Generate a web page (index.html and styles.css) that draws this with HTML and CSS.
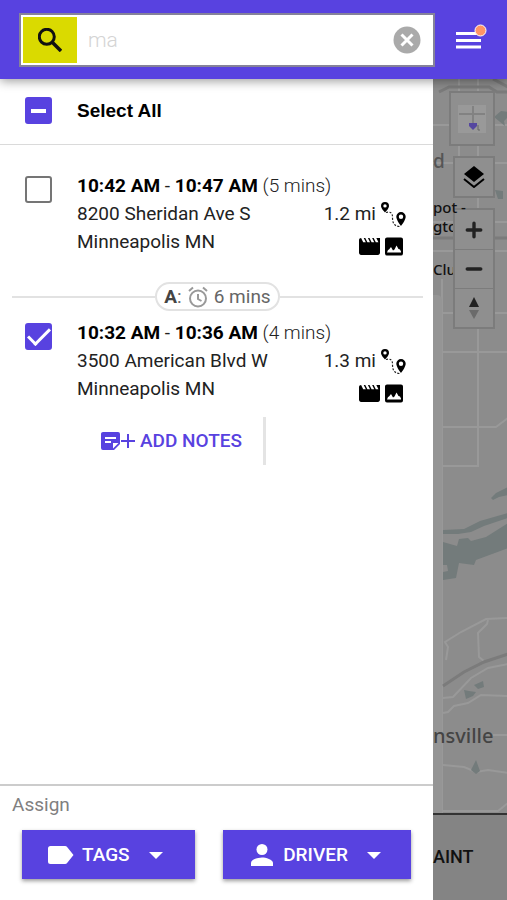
FILE: index.html
```html
<!DOCTYPE html>
<html lang="en">
<head>
<meta charset="utf-8">
<meta name="viewport" content="width=device-width, initial-scale=1">
<title>Trips</title>
<link rel="stylesheet" href="styles.css">
</head>
<body>
<svg class="defs" aria-hidden="true">
  <symbol id="route" viewBox="0 0 26 26">
    <path fill-rule="evenodd" d="M5 0a4 4 0 0 0-4 4c0 2.500 4 6.500 4 6.500S9 6.500 9 4a4 4 0 0 0-4-4zm0 2.200a1.700 1.700 0 1 1 0 3.400 1.700 1.700 0 0 1 0-3.400z"/>
    <path fill-rule="evenodd" d="M21 10a4.700 4.700 0 0 0-4.700 4.700C16.300 18 21 24 21 24s4.700-6 4.700-9.300A4.700 4.700 0 0 0 21 10zm0 2.600a2.200 2.200 0 1 1 0 4.400 2.200 2.200 0 0 1 0-4.400z"/>
    <path d="M6 10.500c4-1 6.500 0 6.500 4.500s.5 9 7 9.500" fill="none" stroke="currentColor" stroke-width="1.200" stroke-dasharray="2 1.500"/>
  </symbol>
  <symbol id="movie" viewBox="2 4 20 16">
    <path d="M18.500 4l2 4h-2.500l-2-4h-1.500l2 4H14l-2-4h-1.500l2 4H10L8 4H6.500l2 4H6L4 4c-1.100 0-2 .9-2 2v12c0 1.100.9 2 2 2h16c1.100 0 2-.9 2-2V4z"/>
  </symbol>
  <symbol id="photo" viewBox="3 3 18 18">
    <path fill-rule="evenodd" d="M5 3h14a2 2 0 0 1 2 2v14a2 2 0 0 1-2 2H5a2 2 0 0 1-2-2V5c0-1.100.9-2 2-2zm0 15h14v-1l-1-2-1.500-.5L14.500 11l-2 4-1.500 1-2-3.500L7 15l-1 .5z"/>
  </symbol>
</svg>

<header class="topbar">
  <form class="search" role="search">
    <button class="search-go" type="button" aria-label="Search">
      <svg viewBox="0 0 24 24"><circle cx="8.800" cy="8.800" r="7.500"/><path d="M14 14l9 9" stroke-width="3.500"/></svg>
    </button>
    <input class="search-text" type="text" value="ma" aria-label="Search trips">
    <button class="search-clear" type="button" aria-label="Clear search">
      <svg viewBox="0 0 28 28"><circle cx="14" cy="14" r="13.500"/><path d="M8.500 8.500l11 11M19.500 8.500l-11 11"/></svg>
    </button>
  </form>
  <button class="menu" type="button" aria-label="Menu">
    <svg viewBox="0 0 32 28"><path d="M1 10.500h25M1 17.500h25M1 24h25"/><circle cx="25.500" cy="7.500" r="5.500"/></svg>
  </button>
</header>

<div class="content">
  <main class="drawer">
    <div class="select-all">
      <input class="check mixed" type="checkbox" id="all">
      <label for="all">Select All</label>
    </div>

    <div class="trips">
      <article class="trip">
        <input class="check" type="checkbox" id="trip1">
        <div class="trip-body">
          <label class="times" for="trip1"><b>10:42 AM</b> - <b>10:47 AM</b> <span class="length">(5 mins)</span></label>
          <div class="line"><span>8200 Sheridan Ave S</span><span class="miles">1.2 mi <svg class="route"><use href="#route"/></svg></span></div>
          <div class="line"><span>Minneapolis MN</span><span class="media"><svg class="movie"><use href="#movie"/></svg><svg class="photo"><use href="#photo"/></svg></span></div>
        </div>
      </article>

      <div class="stop">
        <span class="pill"><span><b>A</b>:</span>
          <svg class="alarm" viewBox="0 0 20 22"><circle cx="10" cy="12.500" r="8"/><path d="M10 8v5l3.500 2M1 5l4-3.500M19 5l-4-3.500"/></svg>
          <span>6 mins</span></span>
      </div>

      <article class="trip">
        <input class="check" type="checkbox" id="trip2" checked>
        <div class="trip-body">
          <label class="times" for="trip2"><b>10:32 AM</b> - <b>10:36 AM</b> <span class="length">(4 mins)</span></label>
          <div class="line"><span>3500 American Blvd W</span><span class="miles">1.3 mi <svg class="route"><use href="#route"/></svg></span></div>
          <div class="line"><span>Minneapolis MN</span><span class="media"><svg class="movie"><use href="#movie"/></svg><svg class="photo"><use href="#photo"/></svg></span></div>
        </div>
      </article>

      <div class="notes">
        <button class="add-notes" type="button">
          <svg viewBox="0 0 35 20"><path fill-rule="evenodd" d="M2 1h15a2 2 0 0 1 2 2v10l-6 6H2a2 2 0 0 1-2-2V3c0-1.100.9-2 2-2zm2 5v2h11V6zm0 4v2h6v-2zm8 7.500l5.500-5.500H12z"/><path d="M20 9h6V3h2v6h6v2h-6v6h-2v-6h-6z"/></svg>
          ADD NOTES
        </button>
      </div>
    </div>

    <footer class="assign">
      <div class="assign-title">Assign</div>
      <div class="actions">
        <button class="action tags" type="button">
          <svg class="icon" viewBox="0 0 26 24"><path d="M2.500 3H17a3 3 0 0 1 2.300 1.200L25.500 12l-6.200 7.800A3 3 0 0 1 17 21H2.500A2.500 2.500 0 0 1 0 18.500v-13A2.500 2.500 0 0 1 2.500 3z"/></svg>
          TAGS
          <svg class="caret" viewBox="0 0 14 8"><path d="M0 0h14L7 7z"/></svg>
        </button>
        <button class="action driver" type="button">
          <svg class="icon" viewBox="0 0 26 24"><circle cx="13" cy="6.500" r="5.500"/><path d="M2 23v-3c0-3.600 7.300-5.600 11-5.600s11 2 11 5.600v3z"/></svg>
          DRIVER
          <svg class="caret" viewBox="0 0 14 8"><path d="M0 0h14L7 7z"/></svg>
        </button>
      </div>
    </footer>
  </main>

  <aside class="side">
    <div class="map">
      <svg class="terrain" viewBox="0 0 74 734" preserveAspectRatio="xMinYMin slice" aria-hidden="true">
        <path class="road" d="M9 200v534M45 0v387H9M26 0v80M0 46h75M0 84h75M0 143h75M0 172h75M9 234h66M9 273h66M9 348h54l12-9M60 656h15"/>
        <path class="road" d="M13 581l2-13-3-5 16-10 25-13 22-1M55 541l-1 4-9 9 1 24 5 4M10 619l10-1 18-19 17-10 20-4M10 634l5-1 6-6 14-3 13-8 27 1M10 686l21 2 12 5 12-2 20 3M10 732h55l10-8"/>
        <path class="highway" d="M10 607l21-14 20-10 24-8M0 159h75M6 13l10-5h40l8 5h11M60 0l15 8"/>
        <path class="water" d="M10 451l21-1 16-8 28-8v5l-24 8-13 6-13 2H10zM10 463l7 2 7 2 2-7 9-1 3 3 15-4 22-14v25l-32 12-2 5-15-2-3 15-13 2v-8l5-1-1-6h-4zM58 419l5-5 12-6v8l-9 2-6 3zM31 611l5 1 7 1-3 4-7 3zM41 606l9-4 1 6-6 2zM38 691l5-10 4 11-4 3zM61 38l7-6 7 1v5l-4 4 1 5zM62 111l8 1v8h-5z"/>
        <path class="strip" d="M0 216h4a5 5 0 0 1 5 5v513H0z"/>
      </svg>
      <span class="place place-d">d</span>
      <span class="place place-depot">pot -</span>
      <span class="place place-gton">gton</span>
      <span class="place place-club">Club</span>
      <span class="place place-town">nsville</span>
      <div class="controls">
        <button class="tool preview" type="button" aria-label="Map style">
          <svg viewBox="0 0 28 28"><path fill="#999" d="M0 0h28v28H0z"/><path d="M1 9h26M15 1v20" stroke="#828282" stroke-width="2"/><path fill="#5547a0" d="M11 18h8v3l-4 4-4-4z"/><path d="M20 20v5h2" fill="none" stroke="#666"/></svg>
        </button>
        <button class="tool layers" type="button" aria-label="Layers">
          <svg viewBox="0 0 22 22"><path d="M11 0l10 8-10 8L1 8z"/><path d="M1 13l10 8 10-8" fill="none" stroke="#000" stroke-width="2"/></svg>
        </button>
        <div class="zoom">
          <button class="tool" type="button" aria-label="Zoom in"><svg viewBox="0 0 16 16"><path d="M8 2v12M2 8h12"/></svg></button>
          <button class="tool" type="button" aria-label="Zoom out"><svg viewBox="0 0 16 16"><path d="M2 8h12"/></svg></button>
          <button class="tool compass" type="button" aria-label="Reset north"><svg viewBox="0 0 12 24"><path d="M6 1l5 10H1z"/><path class="south" d="M6 23l5-9H1z"/></svg></button>
        </div>
      </div>
    </div>
    <div class="tab">AINT</div>
  </aside>
</div>
</body>
</html>
```
FILE: styles.css
```css
:root {
  --brand: #5842e0;
}

* {
  box-sizing: border-box;
}

body {
  margin: 0;
  min-height: 100vh;
  display: flex;
  flex-direction: column;
  font: 19px/28px Roboto, "Liberation Sans", sans-serif;
  color: #222;
}

button {
  margin: 0;
  padding: 0;
  border: 0;
  background: none;
  font: inherit;
  color: inherit;
  display: flex;
  align-items: center;
  justify-content: center;
}

svg {
  display: block;
  flex: none;
}

b {
  font-weight: 700;
  color: #000;
}

.defs {
  position: absolute;
  width: 0;
  height: 0;
}

/* Top bar */
.topbar {
  position: relative;
  z-index: 1;
  display: flex;
  gap: 19px;
  padding: 13px 19px 12px 19px;
  background: var(--brand);
  box-shadow: 0 2px 10px rgba(0, 0, 0, .4);
}

.search {
  flex: 1;
  min-width: 0;
  display: flex;
  height: 54px;
  padding: 2px;
  border: 2px solid #85829a;
  background: #fff;
}

.search-go {
  width: 54px;
  background: #dada00;
}

.search-go svg {
  width: 24px;
  height: 24px;
  fill: none;
  stroke: #111;
  stroke-width: 3;
}

.search-text {
  flex: 1;
  min-width: 0;
  padding: 0 11px;
  border: 0;
  outline: 0;
  font: 300 21px/28px Roboto, sans-serif;
  color: #d4d4d4;
}

.search-clear {
  width: 48px;
}

.search-clear svg {
  width: 28px;
  height: 28px;
  fill: #aaa;
}

.search-clear path {
  stroke: #fff;
  stroke-width: 3;
}

.menu {
  width: 34px;
}

.menu svg {
  width: 32px;
  height: 28px;
  margin-bottom: 6px;
}

.menu path {
  stroke: #fff;
  stroke-width: 3;
}

.menu circle {
  fill: #ff9466;
  stroke: #fff;
}

/* Page split */
.content {
  flex: 1;
  display: grid;
  grid-template-columns: minmax(0, 1fr) 74px;
}

.drawer {
  display: flex;
  flex-direction: column;
  background: #fff;
}

.check {
  appearance: none;
  flex: none;
  display: grid;
  place-items: center;
  width: 27px;
  height: 27px;
  margin: 0;
  border: 2px solid #757575;
  border-radius: 3px;
}

.check.mixed,
.check:checked {
  border-color: var(--brand);
  background: var(--brand);
}

.check.mixed::after {
  content: "";
  width: 15px;
  height: 4px;
  background: #fff;
}

.check:checked::after {
  content: "";
  width: 19px;
  height: 9px;
  margin-bottom: 6px;
  border: solid #fff;
  border-width: 0 0 3px 3px;
  transform: rotate(-45deg);
}

.select-all {
  display: flex;
  align-items: center;
  gap: 25px;
  height: 66px;
  padding: 0 25px 2px;
  border-bottom: 1px solid #dadada;
  font: 700 19px/28px "Liberation Sans", sans-serif;
  color: #000;
}

.trips {
  flex: 1;
  padding-top: 27px;
}

.trip {
  display: flex;
  gap: 25px;
  padding: 0 27px 0 25px;
}

.trip .check {
  margin-top: 4px;
}

.trip-body {
  flex: 1;
  min-width: 0;
}

.times {
  display: block;
}

.length {
  font-weight: 300;
}

.line,
.miles,
.media {
  display: flex;
}

.line {
  justify-content: space-between;
}

.miles {
  gap: 4px;
}

.media {
  gap: 5px;
  align-items: center;
  padding: 8px 3px 0 0;
}

.route {
  width: 26px;
  height: 26px;
  margin-top: 2px;
}

.movie {
  width: 21px;
  height: 17px;
}

.photo {
  width: 18px;
  height: 19px;
}

.stop {
  display: flex;
  align-items: center;
  margin: 26px 10px 8px 12px;
}

.stop::before,
.stop::after {
  content: "";
  flex: 1;
  height: 2px;
  background: #e2e2e2;
}

.pill {
  display: flex;
  align-items: center;
  gap: 6px;
  padding: 0 7px;
  border: 2px solid #e2e2e2;
  border-radius: 15px;
  line-height: 25px;
  color: #666;
}

.pill b {
  color: #444;
}

.alarm {
  width: 20px;
  height: 22px;
  fill: none;
  stroke: #999;
  stroke-width: 2;
}

.notes {
  display: flex;
  width: 266px;
  height: 48px;
  margin-top: 14px;
  padding-left: 80px;
  border-right: 3px solid #e4e4e4;
}

.add-notes {
  flex: 1;
  gap: 4px;
  font-weight: 500;
  color: var(--brand);
}

.add-notes svg {
  width: 35px;
  height: 20px;
  fill: var(--brand);
}

/* Assign bar */
.assign {
  padding: 5px 22px 21px;
  border-top: 2px solid #ccc;
}

.assign-title {
  margin-left: -10px;
  color: #808080;
}

.actions {
  display: flex;
  gap: 28px;
  margin-top: 11px;
}

.action {
  flex: 172 0 0;
  justify-content: flex-start;
  height: 49px;
  gap: 8px;
  padding-left: 26px;
  background: var(--brand);
  box-shadow: 0 2px 4px rgba(0, 0, 0, .4);
  font-weight: 500;
  color: #fff;
}

.driver {
  flex-grow: 189;
}

.action svg {
  fill: #fff;
}

.icon {
  width: 26px;
  height: 24px;
}

.caret {
  width: 14px;
  height: 8px;
  margin: 2px 0 0 11px;
}

/* Dimmed map */
.side {
  display: flex;
  flex-direction: column;
}

.map {
  position: relative;
  flex: 1;
  overflow: hidden;
  background: #8c8c8c;
}

.terrain {
  position: absolute;
  inset: 0;
  width: 100%;
  height: 100%;
}

.road {
  fill: none;
  stroke: #999;
  stroke-width: 2;
}

.highway {
  fill: none;
  stroke: #7b7b7b;
  stroke-width: 3;
}

.water {
  fill: #737b7b;
}

.strip {
  fill: #959595;
}

.place {
  position: absolute;
  left: 0;
  font: 500 15px/18px "Noto Sans", sans-serif;
  color: #111;
  white-space: nowrap;
}

.place-d {
  top: 73px;
  font-size: 19px;
  color: #555;
}

.place-depot {
  top: 119px;
  z-index: 1;
}

.place-gton {
  top: 138px;
}

.place-club {
  top: 181px;
}

.place-town {
  top: 644px;
  font-size: 20px;
  line-height: 26px;
  color: #444;
}

.controls {
  position: absolute;
  top: 12px;
  right: 12px;
  display: flex;
  flex-direction: column;
  align-items: flex-end;
  gap: 10px;
}

.tool {
  width: 38px;
  height: 39px;
  background: #8f8f8f;
}

.preview,
.layers,
.zoom {
  box-sizing: content-box;
  border: 2px solid #7c7c7c;
}

.preview {
  width: 42px;
  height: 51px;
}

.layers {
  height: 38px;
}

.preview svg {
  width: 28px;
  height: 28px;
}

.layers svg {
  width: 22px;
  height: 22px;
}

.zoom .tool + .tool {
  border-top: 1px solid #7c7c7c;
}

.zoom svg {
  width: 18px;
  height: 18px;
  fill: none;
  stroke: #222;
  stroke-width: 3;
  stroke-linecap: round;
}

.zoom .compass svg {
  width: 12px;
  height: 24px;
  fill: #222;
  stroke: none;
}

.zoom .compass .south {
  fill: #6b6b6b;
}

.tab {
  height: 87px;
  border-top: 2px solid #333;
  background: #848484;
  font-size: 18px;
  font-weight: 500;
  line-height: 84px;
  color: #111;
}
```
